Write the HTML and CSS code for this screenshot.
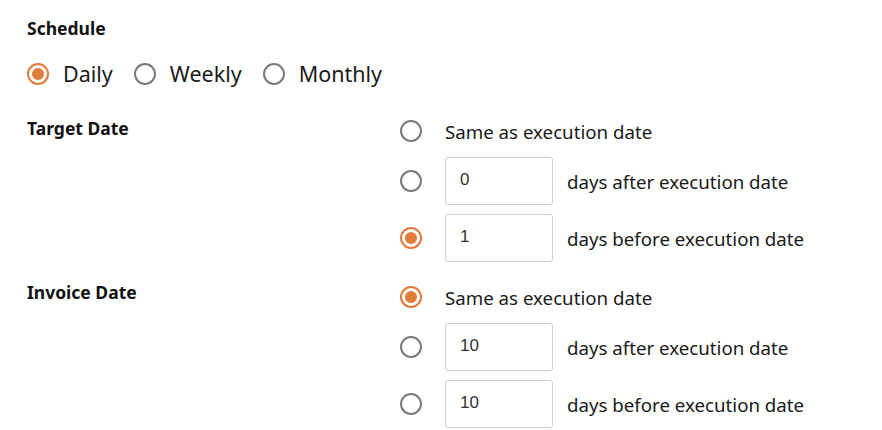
FILE: index.html
```html
<!DOCTYPE html>
<html>
<head>
<meta charset="utf-8">
<link rel="stylesheet" href="styles.css">
</head>
<body>
<div class="page">
  <div class="section-title">Schedule</div>
  <div class="freq">
    <label class="freq-item"><span class="radio checked"></span><span>Daily</span></label>
    <label class="freq-item"><span class="radio"></span><span>Weekly</span></label>
    <label class="freq-item"><span class="radio"></span><span>Monthly</span></label>
  </div>

  <div class="field target">
    <div class="field-label">Target Date</div>
    <div class="options">
      <div class="opt opt-plain"><span class="radio"></span><span class="opt-text">Same as execution date</span></div>
      <div class="opt"><span class="radio"></span><div class="num">0</div><span class="opt-text">days after execution date</span></div>
      <div class="opt"><span class="radio checked"></span><div class="num">1</div><span class="opt-text">days before execution date</span></div>
    </div>
  </div>

  <div class="field invoice">
    <div class="field-label">Invoice Date</div>
    <div class="options">
      <div class="opt opt-plain"><span class="radio checked"></span><span class="opt-text">Same as execution date</span></div>
      <div class="opt"><span class="radio"></span><div class="num">10</div><span class="opt-text">days after execution date</span></div>
      <div class="opt"><span class="radio"></span><div class="num">10</div><span class="opt-text">days before execution date</span></div>
    </div>
  </div>
</div>
</body>
</html>
```

FILE: styles.css
```css
html, body {
  margin: 0;
  padding: 0;
  background: #ffffff;
}
body {
  font-family: "Noto Sans", "Open Sans", sans-serif;
  color: #1a1a1a;
}
.page {
  padding: 16px 0 0 27px;
}
.section-title,
.field-label {
  font-weight: 700;
  font-size: 17.5px;
  line-height: 24px;
  color: #111;
}
.freq {
  display: flex;
  align-items: center;
  gap: 21px;
  height: 30px;
  margin-top: 19px;
}
.freq-item {
  display: flex;
  align-items: center;
  gap: 14px;
  font-size: 21.5px;
  line-height: 30px;
}
.radio {
  box-sizing: border-box;
  width: 22px;
  height: 22px;
  border: 2px solid #7a7a7a;
  border-radius: 50%;
  flex: none;
  display: flex;
  align-items: center;
  justify-content: center;
  background: #fff;
}
.radio.checked {
  border-color: #e07b39;
}
.radio.checked::after {
  content: "";
  width: 12px;
  height: 12px;
  border-radius: 50%;
  background: #e07b39;
}
.field {
  display: grid;
  grid-template-columns: 373px auto;
  align-items: start;
}
.target {
  margin-top: 25px;
}
.invoice {
  margin-top: 18px;
}
.field-label {
  padding-top: 2px;
}
.invoice .field-label {
  padding-top: 0;
}
.options {
  display: flex;
  flex-direction: column;
  gap: 9px;
}
.opt {
  display: flex;
  align-items: center;
  height: 48px;
  font-size: 18.7px;
}
.opt-plain {
  height: 34px;
}
.opt .radio {
  margin-right: 23px;
}
.num {
  box-sizing: border-box;
  width: 108px;
  height: 48px;
  border: 1px solid #cfcfd4;
  border-radius: 3px;
  padding-left: 14px;
  font-family: "Liberation Sans", Arial, sans-serif;
  font-size: 17px;
  line-height: 44px;
  color: #333;
  margin-right: 14px;
}
```
